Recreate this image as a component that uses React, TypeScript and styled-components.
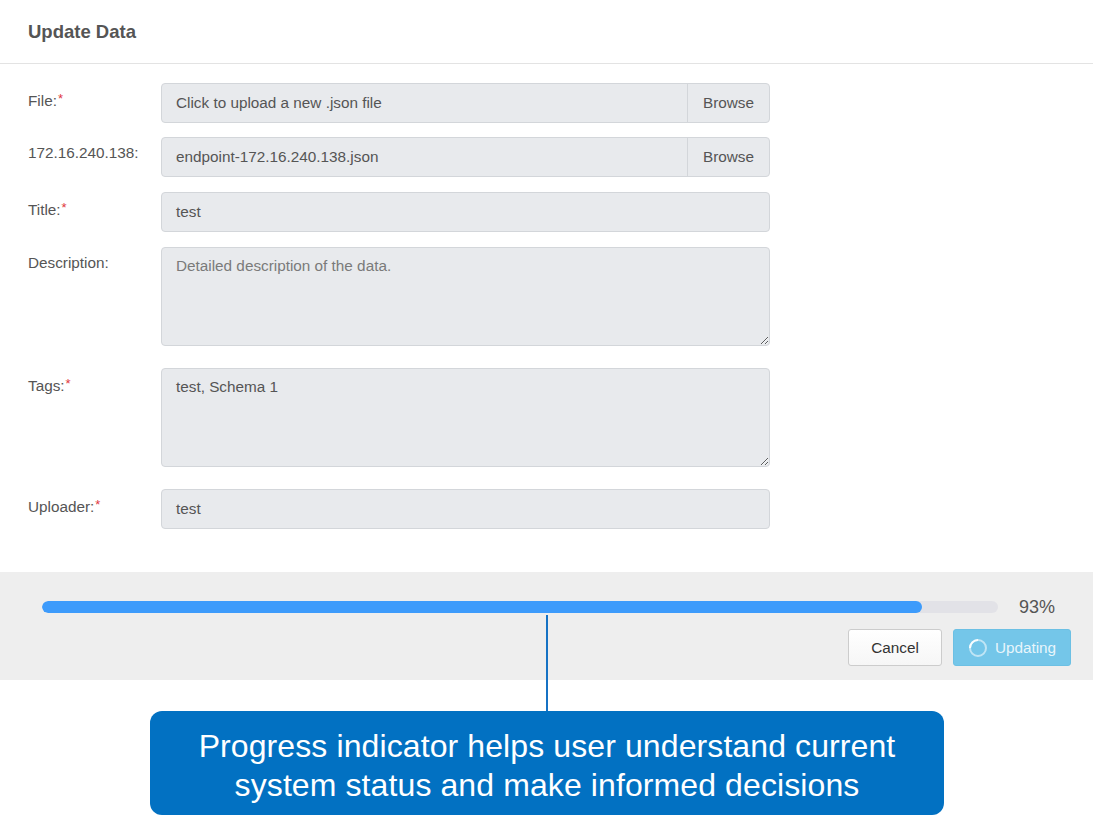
import React from "react";
import styled, { createGlobalStyle } from "styled-components";

const Global = createGlobalStyle`
  html, body { margin: 0; padding: 0; background: #ffffff; }
  body { font-family: "Liberation Sans", Arial, Helvetica, sans-serif; }
  * { box-sizing: border-box; }
`;

const Page = styled.div`
  width: 1093px;
  height: 824px;
  background: #ffffff;
  display: flex;
  flex-direction: column;
  overflow: hidden;
`;

const Header = styled.div`
  height: 64px;
  border-bottom: 1px solid #e3e3e3;
  display: flex;
  align-items: center;
  padding: 1px 28px 0;
`;

const Title = styled.h1`
  margin: 0;
  font-size: 18.5px;
  font-weight: bold;
  color: #555555;
`;

const Form = styled.div`
  display: flex;
  flex-direction: column;
  padding: 19px 0 0 28px;
`;

const Row = styled.div<{ $gap?: number }>`
  display: grid;
  grid-template-columns: 133px 609px;
  margin-bottom: ${(p) => p.$gap ?? 14}px;
`;

const Label = styled.label`
  font-size: 15.3px;
  color: #555555;
  padding-top: 7px;
  line-height: 18px;
`;

const Req = styled.span`
  color: #e0383e;
  font-size: 13px;
  vertical-align: 3px;
  margin-left: 1px;
`;

const InputGroup = styled.div`
  display: flex;
  height: 40px;
  border: 1px solid #d3d6da;
  border-radius: 4px;
  background: #e8eaed;
  overflow: hidden;
`;

const Field = styled.div`
  flex: 1;
  display: flex;
  align-items: center;
  padding: 0 14px;
  font-size: 15.3px;
  color: #555555;
`;

const Addon = styled.div`
  width: 82px;
  border-left: 1px solid #d3d6da;
  display: flex;
  align-items: center;
  justify-content: center;
  font-size: 15.3px;
  color: #555555;
`;

const TextArea = styled.textarea`
  display: block;
  width: 609px;
  height: 99px;
  margin: 0;
  border: 1px solid #d3d6da;
  border-radius: 4px;
  background: #e8eaed;
  padding: 8px 14px;
  font-family: "Liberation Sans", Arial, Helvetica, sans-serif;
  font-size: 15.3px;
  line-height: 20px;
  color: #555555;
  resize: vertical;
  outline: none;
  &::placeholder { color: #7a7a7a; }
`;

const Footer = styled.div`
  margin-top: 43px;
  height: 108px;
  background: #eeeeee;
  padding: 29px 22px 0 42px;
  display: flex;
  flex-direction: column;
`;

const ProgressRow = styled.div`
  display: flex;
  align-items: center;
  height: 12px;
`;

const Track = styled.div`
  width: 956px;
  height: 12px;
  border-radius: 6px;
  background: #e2e2e7;
  overflow: hidden;
`;

const Fill = styled.div`
  height: 100%;
  border-radius: 6px;
  background: #3d9bfb;
`;

const Percent = styled.span`
  margin-left: 21px;
  font-size: 18px;
  color: #555555;
`;

const Buttons = styled.div`
  display: flex;
  justify-content: flex-end;
  gap: 11px;
  margin-top: 16px;
`;

const Button = styled.button<{ $primary?: boolean }>`
  height: 37px;
  padding: 0;
  border-radius: 3px;
  font-family: "Liberation Sans", Arial, Helvetica, sans-serif;
  font-size: 15.3px;
  display: flex;
  align-items: center;
  justify-content: center;
  gap: 7px;
  width: ${(p) => (p.$primary ? 118 : 94)}px;
  border: 1px solid ${(p) => (p.$primary ? "#6cc0e4" : "#cccccc")};
  background: ${(p) => (p.$primary ? "#74c6e9" : "linear-gradient(#ffffff, #f6f6f6)")};
  color: ${(p) => (p.$primary ? "rgba(255,255,255,0.85)" : "#333333")};
`;

const CalloutArea = styled.div`
  padding: 31px 0 0 150px;
`;

const Callout = styled.div`
  position: relative;
  width: 794px;
  height: 104px;
  border-radius: 12px;
  background: #0271c2;
  color: #ffffff;
  display: flex;
  align-items: center;
  justify-content: center;
  text-align: center;
  font-family: "Liberation Sans", Arial, Helvetica, sans-serif;
  font-size: 32px;
  line-height: 39px;
  letter-spacing: 0.1px;
  padding-top: 6px;
`;

const Connector = styled.div`
  position: absolute;
  left: 396px;
  top: -96px;
  width: 2px;
  height: 96px;
  background: #1672c4;
`;

const Spinner = () => (
  <svg width="20" height="20" viewBox="0 0 20 20">
    <circle cx="10" cy="10" r="8" fill="none" stroke="rgba(255,255,255,0.55)" strokeWidth="2" />
    <path d="M10 2 A8 8 0 0 0 2 10" fill="none" stroke="rgba(255,255,255,0.9)" strokeWidth="2" />
  </svg>
);

export default function App() {
  return (
    <Page>
      <Global />
      <Header>
        <Title>Update Data</Title>
      </Header>
      <Form>
        <Row>
          <Label>File:<Req>*</Req></Label>
          <InputGroup>
            <Field>Click to upload a new .json file</Field>
            <Addon>Browse</Addon>
          </InputGroup>
        </Row>
        <Row $gap={15}>
          <Label>172.16.240.138:</Label>
          <InputGroup>
            <Field>endpoint-172.16.240.138.json</Field>
            <Addon>Browse</Addon>
          </InputGroup>
        </Row>
        <Row $gap={15}>
          <Label>Title:<Req>*</Req></Label>
          <InputGroup>
            <Field>test</Field>
          </InputGroup>
        </Row>
        <Row $gap={22}>
          <Label>Description:</Label>
          <TextArea readOnly placeholder="Detailed description of the data." />
        </Row>
        <Row $gap={22}>
          <Label>Tags:<Req>*</Req></Label>
          <TextArea readOnly value="test, Schema 1" />
        </Row>
        <Row $gap={0}>
          <Label>Uploader:<Req>*</Req></Label>
          <InputGroup>
            <Field>test</Field>
          </InputGroup>
        </Row>
      </Form>
      <Footer>
        <ProgressRow>
          <Track>
            <Fill style={{ width: "92%" }} />
          </Track>
          <Percent>93%</Percent>
        </ProgressRow>
        <Buttons>
          <Button>Cancel</Button>
          <Button $primary>
            <Spinner />
            Updating
          </Button>
        </Buttons>
      </Footer>
      <CalloutArea>
        <Callout>
          <Connector />
          Progress indicator helps user understand current
          <br />
          system status and make informed decisions
        </Callout>
      </CalloutArea>
    </Page>
  );
}
